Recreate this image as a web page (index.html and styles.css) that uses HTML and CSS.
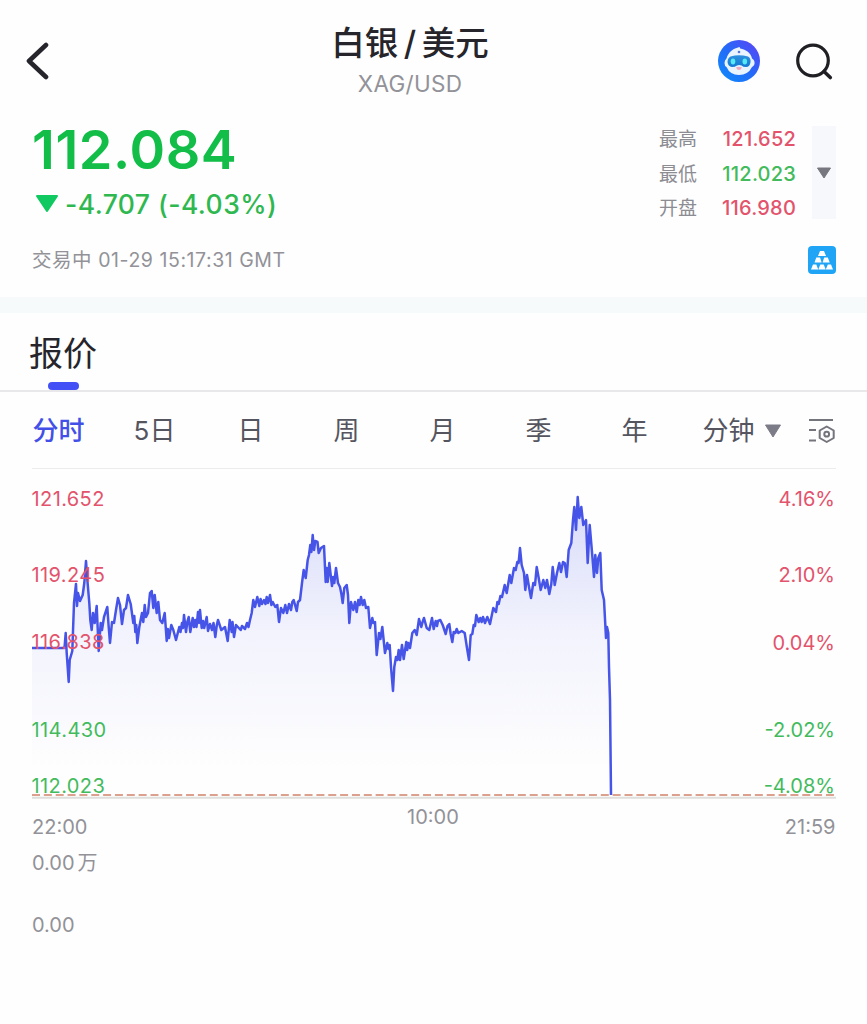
FILE: index.html
```
<!DOCTYPE html>
<html lang="zh-CN">
<head>
	<meta charset="utf-8">
	<title>白银/美元</title>
	<link rel="stylesheet" href="styles.css">
</head>

<body>

<div class="header">
	<a class="btn_back">
		<svg width="24" height="40" viewBox="0 0 24 40"><path d="M20 4L3 20L20 36" fill="none" stroke="#25252b" stroke-width="4.600" stroke-linecap="round" stroke-linejoin="round"/></svg>
	</a>
	<div class="title">
		<h1>白银<span class="slash">/</span>美元</h1>
		<div class="symbol">XAG/USD</div>
	</div>
	<div class="tools">
		<svg class="robot" width="42" height="42" viewBox="0 0 42 42">
			<defs>
				<linearGradient id="robot_bg" x1="0" y1="1" x2="1" y2="0">
					<stop offset="0" stop-color="#0c8dfb"/>
					<stop offset=".5" stop-color="#246af8"/>
					<stop offset="1" stop-color="#6040f5"/>
				</linearGradient>
				<linearGradient id="robot_eye" x1="0" y1="0" x2="0" y2="1">
					<stop offset="0" stop-color="#2d91df"/>
					<stop offset="1" stop-color="#147ad2"/>
				</linearGradient>
			</defs>
			<circle cx="21" cy="21" r="21" fill="url(#robot_bg)"/>
			<path d="M20 7.500Q22 6 22.200 8.500C28 9.500 33 13 34 18.500Q37 20 36.500 24Q36 26 34 27Q30 35 21 35Q12 35 8.500 27Q6.500 26 6.500 23Q6.500 20 8.500 18.500C10 13 14 9 20 7.500Z" fill="#eaf4ff"/>
			<path d="M12.500 16.500Q21 14 30 16.500Q33 18 32.500 22Q32 27 28 27Q25 27 23.500 25.500Q21 24.500 19 25.500Q17 27 14 27Q10 26.500 9.500 22Q9.500 18 12.500 16.500Z" fill="url(#robot_eye)"/>
			<ellipse cx="15" cy="21.500" rx="2.300" ry="3" fill="#56e9f4"/>
			<ellipse cx="26.800" cy="21.500" rx="2.300" ry="3" fill="#56e9f4"/>
			<circle cx="21" cy="12" r="1.300" fill="#5577d8"/>
			<path d="M18 27.500Q21 26 24 27.500Q23 30 21 30Q19 30 18 27.500Z" fill="#f2a9bd"/>
		</svg>
		<svg class="search" width="38" height="38" viewBox="0 0 38 38"><circle cx="18" cy="17.500" r="15.300" fill="none" stroke="#202024" stroke-width="3.200"/><path d="M29 28.500L35.300 34.500" stroke="#202024" stroke-width="3.600" stroke-linecap="round"/></svg>
	</div>
</div>

<div class="quote">
	<div class="quote_main">
		<div class="price">112.084</div>
		<div class="change">
			<svg width="24" height="18" viewBox="0 0 24 18"><path d="M2 1H22L12 16Z" fill="#10c960" stroke="#10c960" stroke-width="2" stroke-linejoin="round"/></svg>
			<span>-4.707 (-4.03%)</span>
		</div>
	</div>
	<div class="quote_side">
		<div class="stats">
			<span>最高</span><b class="up">121.652</b>
			<span>最低</span><b class="down">112.023</b>
			<span>开盘</span><b class="up">116.980</b>
		</div>
		<div class="more">
			<svg width="16" height="12" viewBox="0 0 16 12"><path d="M1.500 1H14.500L8 11Z" fill="#77777f" stroke="#77777f" stroke-linejoin="round"/></svg>
		</div>
	</div>
</div>

<div class="status">
	<span>交易中 01-29 15:17:31 GMT</span>
	<svg width="28" height="28" viewBox="0 0 28 28">
		<rect width="28" height="28" rx="4" fill="#20a5f6"/>
		<g fill="#fff">
			<path d="M12 5H16L18 10H10Z"/>
			<path d="M8.300 11.500H12L13.600 16.500H6.500Z"/>
			<path d="M16.200 11.500H19.800L21.700 16.500H14.600Z"/>
			<path d="M5 18.500H8.300L10.200 23.500H3Z"/>
			<path d="M12.300 18.500H15.700L17.700 23.500H10.300Z"/>
			<path d="M19.800 18.500H23L25 23.500H17.800Z"/>
		</g>
	</svg>
</div>

<div class="section_tabs">
	<a class="selected">报价</a>
</div>

<div class="periods">
	<a class="selected">分时</a>
	<a>5日</a>
	<a>日</a>
	<a>周</a>
	<a>月</a>
	<a>季</a>
	<a>年</a>
	<a class="minutes">分钟 <svg width="18" height="14" viewBox="0 0 18 14"><path d="M1.500 1H16.500L9 13Z" fill="#7c7c88" stroke="#7c7c88" stroke-linejoin="round"/></svg></a>
	<svg class="settings" width="28" height="26" viewBox="0 0 28 26" fill="none" stroke="#74747c" stroke-width="2"><path d="M1 2H25M1 12H8M1 22.500H8"/><path d="M18.700 8.500L25.700 12.500V20L18.700 24L11.700 20V12.500Z" stroke-linejoin="round"/><circle cx="18.700" cy="16.200" r="2.400"/></svg>
</div>

<svg class="chart" width="867" height="480" viewBox="0 469 867 480">
	<defs>
		<linearGradient id="area" gradientUnits="userSpaceOnUse" x1="0" y1="496" x2="0" y2="770">
			<stop offset="0" stop-color="#4654e8" stop-opacity=".21"/>
			<stop offset=".5" stop-color="#4654e8" stop-opacity=".065"/>
			<stop offset="1" stop-color="#4654e8" stop-opacity="0"/>
		</linearGradient>
	</defs>
	<path id="fill" fill="url(#area)"/>
	<path class="axis" d="M32 797.800H836"/>
	<path class="base" d="M32 795H834"/>
	<path id="line" class="line"/>
	<g class="label price_label up">
		<text x="31.500" y="506">121.652</text>
		<text x="31.500" y="581.500">119.245</text>
		<text x="31.500" y="649">116.838</text>
	</g>
	<g class="label price_label down">
		<text x="31.500" y="736.500">114.430</text>
		<text x="31.500" y="792.500">112.023</text>
	</g>
	<g class="label up">
		<text class="end" x="835" y="506">4.16%</text>
		<text class="end" x="835" y="581.500">2.10%</text>
		<text class="end" x="835" y="649.500">0.04%</text>
	</g>
	<g class="label down">
		<text class="end" x="835" y="736.500">-2.02%</text>
		<text class="end" x="835" y="792.500">-4.08%</text>
	</g>
	<g class="label time_label">
		<text x="32" y="833.500">22:00</text>
		<text x="407" y="824">10:00</text>
		<text class="end" x="835.500" y="833.500">21:59</text>
		<text x="32" y="869.500">0.00<tspan dx="3">万</tspan></text>
		<text x="32" y="931.500">0.00</text>
	</g>
</svg>

<script type="text/javascript">
// x,y pairs of the intraday line
var pts = "32,648 64.5,648 65.7,633 66.7,653 68.7,682 69.7,660 72.3,651 74,603 76,584 77,606 78,593 80,601 82.7,595 84.3,583 86,561 87.7,584 89.3,603 90.3,620 91.7,630 93,613 94.7,623 96.7,606 98.7,651 100.7,623 102,630 104,617 107.3,607 108.7,627 110,643 112,622 114,623 116,610 118,598 120,605 122,624 124,610 126,608 128,595 130.7,604 133.3,623 134.3,616 135.3,632 136.3,625 137.3,643 139.3,627 142,613 143.3,622 144.7,605 146,617 148,613 150,593 151.7,591 153.3,608 154.7,595 156.7,613 158.3,602 160,620 162.3,623 164.7,613 166.7,641 167.8,629 169,638 171.3,625 173.3,630 176,640 179.3,627 180.5,632 182,623 183,628 184,615 186,632 187.3,622 188.7,617 190.3,632 192.7,618 194,627 195.3,620 196.5,627 198,612 199,623 200,610 201.7,628 203,621 204.2,628 206.7,617 208,631 210,624 212,630 213.5,623 215.3,637 216.8,625 218,620 221.3,630 225,627 227.7,641 229.7,620 231.7,632 232.5,622 234,637 236,625 240.7,630 242,626 245,629 247,623 248.5,627 250,620 251.7,613 253.3,600 255,607 257.3,597 259.3,606 260.6,599 262,604 264,600 265.5,604 266.7,597 268,603 270,595 271.4,605 272.7,602 275.3,607 277.3,605 279,622 281,608 283.3,613 285.3,605 287,613 289,604 291,610 292.3,602 293.7,600 296.7,611 298,602 300,600 302,583 303.7,570 305.7,578 307.7,560 309,555 310.3,545 311.4,552 312.7,535 314,550 315.3,541 317.5,542 318.7,553 321,548 324,546 325.7,582 326.7,568 327.7,582 329.3,563 330.8,576 332,586 333.2,577 334.3,583 336,568 338,583 340,587 341.4,594 342.7,603 344.3,588 346.7,585 348,595 349.3,623 351,602 353.3,610 355,602 356.7,612 358.3,600 359.6,605 361,597 362.7,605 364.3,600 366,608 368.3,607 370,628 372.3,618 373.4,623 375,622 376.7,655 379,633 380.4,639 382.3,627 385,653 387.3,643 388.5,649 389.7,645 391,667 393,691 394.3,667 396,657 397.4,660 398.7,650 400,660 402,645 403.7,659 406.3,642 407.2,650 408.3,643 410,648 412.3,633 414.7,630 416.7,635 419,619 421.3,627 422.6,622 424,618 426.7,628 429.3,630 432,618 433.7,629 435.7,621 437,626 438,621 440.3,620 442.7,625 445.7,634 447.5,626 449.3,624 450.7,634 452.3,642 453.7,632 455.3,633 456.7,629 458.3,633 461.7,631 464.7,633 467,648 469,660 470.7,635 472.3,634 473.7,625 475,626 476.3,615 478.7,622 480.3,618 481.7,622 483,617 485,623 487.3,617 490,624 493.3,608 496,612 497.4,602 498.7,604 500.4,596 502,597 504.7,585 506.7,593 509.7,575 511.3,583 514,568 515.7,570 517.3,562 518.6,563 520,548 521.7,565 524,573 525.3,590 527,575 529,587 531,598 533.3,583 535,585 536.7,567 538.7,578 540.7,590 543.3,580 545.3,588 547,580 549.3,594 551.3,584 552.7,567 554.7,585 557,573 559.3,563 561,572 563,562 564.8,563 566.7,577 568.7,550 571.3,543 573,520 574.3,507 576,530 577.7,497 579.3,518 581.3,507 583.3,525 586,520 587.7,563 589.7,525 592,552 594,577 595.3,555 597,573 598.3,558 600.3,553 601.7,590 604,600 606,638 607,627 608.3,633 609,667 610,700 611,795";

document.getElementById("line").setAttribute("d", "M" + pts);
document.getElementById("fill").setAttribute("d", "M" + pts + " 32,795Z");
</script>
</body>

</html>
```
FILE: styles.css
```
* {
	box-sizing: border-box;
}

body {
	margin: 0;
	height: 1024px;
	background-color: #fefefe;
	color: #25252b;
	font-family: Inter, "Noto Sans CJK SC", sans-serif;
}

svg {
	display: block;
	flex: none;
}

.header {
	display: grid;
	grid-template-columns: 150px 1fr 150px;
	height: 117px;
}

.btn_back {
	padding: 41px 0 0 26px;
}

.title {
	padding-top: 17px;
	margin-right: 47px;
	text-align: center;
}

.title h1 {
	margin: 0;
	height: 52px;
	font-size: 33.500px;
	line-height: 52px;
	font-weight: 500;
	white-space: nowrap;
}

.slash {
	margin: 0 5.500px;
}

.symbol {
	font-size: 22.500px;
	line-height: 30px;
	letter-spacing: .3px;
	color: #929298;
}

.tools {
	display: flex;
	justify-content: flex-end;
	gap: 35px;
	padding: 40px 34px 0 0;
}

.search {
	margin-top: 3px;
}

.quote {
	display: flex;
	justify-content: space-between;
	height: 123px;
	padding: 0 31px 0 32px;
}

.price {
	height: 66px;
	font-size: 54px;
	line-height: 65px;
	font-weight: 600;
	letter-spacing: .6px;
	color: #12be48;
}

.change {
	display: flex;
	align-items: center;
	gap: 6px;
	height: 42px;
	padding-left: 3px;
	font-size: 26.500px;
	font-weight: 500;
	letter-spacing: .45px;
	color: #2fb850;
	white-space: nowrap;
}

.quote_side {
	display: flex;
	gap: 16px;
	padding-top: 5px;
}

.stats {
	display: grid;
	grid-template-columns: 38px 99px;
	grid-auto-rows: 34.500px;
	font-size: 19px;
	line-height: 35px;
	color: #8c8c93;
}

.stats b {
	font-size: 20px;
	line-height: 34px;
	font-weight: 500;
	letter-spacing: .2px;
	text-align: right;
}

.up {
	color: #e3536c;
	fill: #e3536c;
}

.down {
	color: #43bb5d;
	fill: #43bb5d;
}

.more {
	display: flex;
	align-items: center;
	justify-content: center;
	width: 24px;
	height: 93px;
	margin-top: 4px;
	background-color: #f7f8fc;
}

.status {
	display: flex;
	align-items: center;
	justify-content: space-between;
	height: 57px;
	padding: 0 31px 17px 32px;
	font-size: 19.500px;
	letter-spacing: .55px;
	line-height: 22px;
	color: #929298;
}

.section_tabs {
	height: 95px;
	padding: 21px 0 0 29px;
	border-top: 16px solid #f7fafa;
	border-bottom: 2px solid #e8e8ea;
}

.section_tabs a {
	display: flex;
	flex-direction: column;
	align-items: center;
	width: 68px;
	font-size: 34px;
	line-height: 40px;
	white-space: nowrap;
}

.section_tabs a::after {
	content: "";
	width: 31px;
	height: 8px;
	margin-top: 8px;
	border-radius: 4px;
	background-color: #4350f5;
}

.periods {
	display: grid;
	grid-template-columns: repeat(7, 96px) 102px 28px;
	align-items: center;
	height: 77px;
	padding-left: 10.500px;
	font-size: 26px;
	line-height: 76px;
	text-align: center;
	color: #55555f;
	background: linear-gradient(#ececee, #ececee) 32px 100% / 804px 1.500px no-repeat;
}

.periods a {
	padding-top: 1px;
}

.periods .selected {
	font-weight: 500;
	color: #4350e8;
}

.periods .minutes {
	display: flex;
	align-items: center;
	justify-content: flex-end;
	gap: 9px;
	padding-right: 3px;
}

.periods .settings {
	margin-left: 23.500px;
}

.chart .line {
	fill: none;
	stroke: #4654e8;
	stroke-width: 2.500;
	stroke-linejoin: round;
}

.chart .axis {
	stroke: #dedfdc;
	stroke-width: 2;
}

.chart .base {
	stroke: #dca18e;
	stroke-width: 2;
	stroke-dasharray: 8 3.850;
}

.label {
	font-size: 20px;
}

.price_label {
	letter-spacing: .4px;
}

.time_label {
	fill: #929298;
}

.label .end {
	text-anchor: end;
}
```
